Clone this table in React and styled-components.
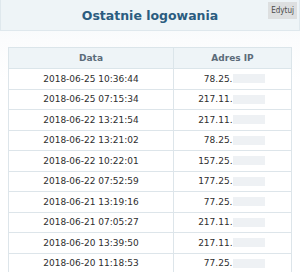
import React from "react";
import styled, { createGlobalStyle } from "styled-components";

const GlobalStyle = createGlobalStyle`
  html, body {
    margin: 0;
    padding: 0;
    background: #ffffff;
  }
  body {
    font-family: "DejaVu Sans", Verdana, sans-serif;
  }
`;

const Panel = styled.div`
  width: 300px;
  height: 272px;
  overflow: hidden;
  background: linear-gradient(#f2f7f9 0px, #fbfcfd 40px, #ffffff 80px);
`;

const PanelHeader = styled.div`
  position: relative;
  height: 30px;
  display: flex;
  align-items: center;
  justify-content: center;
  background: #eef4f7;
  border: 1px solid #dfe8ed;
  border-top: none;
`;

const Title = styled.h2`
  margin: 0;
  font-size: 12.5px;
  font-weight: bold;
  color: #2b5c80;
`;

const EditButton = styled.button`
  position: absolute;
  top: 2px;
  right: 2px;
  height: 17px;
  padding: 0 3px;
  border: none;
  background: #dddfe0;
  color: #4a4a4a;
  font-family: "DejaVu Sans Condensed", "DejaVu Sans", sans-serif;
  font-size: 8px;
  cursor: pointer;
`;

const Body = styled.div`
  padding: 16px 8px 0;
`;

const Table = styled.table`
  width: 284px;
  border-collapse: collapse;
  table-layout: fixed;
  font-size: 9px;
`;

const Head = styled.th`
  height: 20px;
  padding: 0;
  background: #eef4f7;
  border: 1px solid #dbe5ea;
  color: #5b6b79;
  font-weight: bold;
  text-align: center;
`;

const Cell = styled.td`
  height: 19.5px;
  padding: 0;
  background: #ffffff;
  border: 1px solid #dde5ea;
  color: #2e2e2e;
  text-align: center;
`;

const Ip = styled.div`
  display: grid;
  grid-template-columns: 1fr 1fr;
  align-items: center;
`;

const IpStart = styled.span`
  justify-self: end;
  white-space: nowrap;
`;

const IpHidden = styled.span`
  width: 32px;
  height: 9px;
  background: #eef1f4;
`;

const logins = [
  ["2018-06-25 10:36:44", "78.25."],
  ["2018-06-25 07:15:34", "217.11."],
  ["2018-06-22 13:21:54", "217.11."],
  ["2018-06-22 13:21:02", "78.25."],
  ["2018-06-22 10:22:01", "157.25."],
  ["2018-06-22 07:52:59", "177.25."],
  ["2018-06-21 13:19:16", "77.25."],
  ["2018-06-21 07:05:27", "217.11."],
  ["2018-06-20 13:39:50", "217.11."],
  ["2018-06-20 11:18:53", "77.25."],
];

export default function App() {
  return (
    <Panel>
      <GlobalStyle />
      <PanelHeader>
        <Title>Ostatnie logowania</Title>
        <EditButton>Edytuj</EditButton>
      </PanelHeader>
      <Body>
        <Table>
          <colgroup>
            <col style={{ width: 165 }} />
            <col />
          </colgroup>
          <thead>
            <tr>
              <Head>Data</Head>
              <Head>Adres IP</Head>
            </tr>
          </thead>
          <tbody>
            {logins.map(([date, ip]) => (
              <tr key={date}>
                <Cell>{date}</Cell>
                <Cell>
                  <Ip>
                    <IpStart>{ip}</IpStart>
                    <IpHidden />
                  </Ip>
                </Cell>
              </tr>
            ))}
          </tbody>
        </Table>
      </Body>
    </Panel>
  );
}
